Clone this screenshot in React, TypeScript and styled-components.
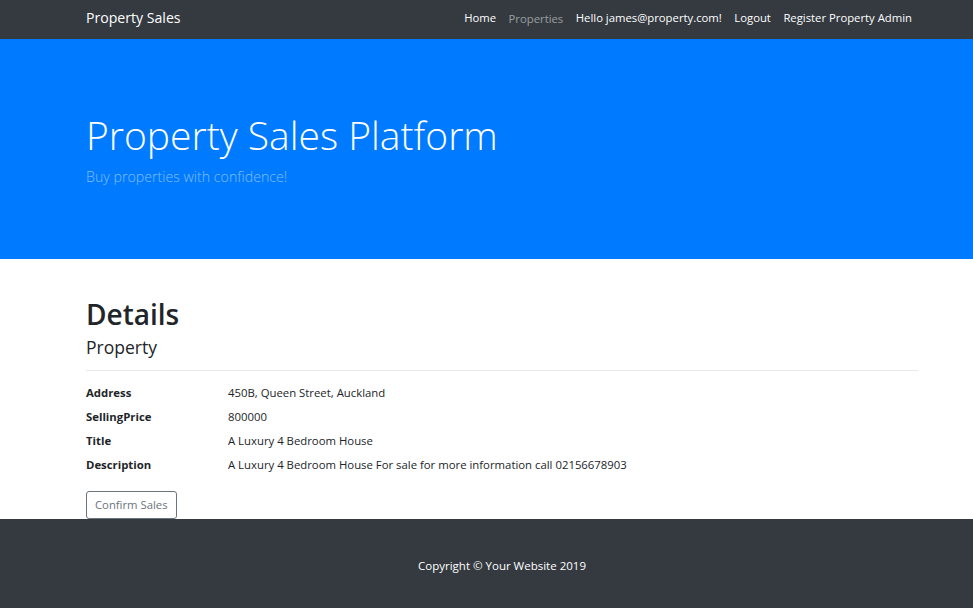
import React from "react";
import styled, { createGlobalStyle } from "styled-components";

const GlobalStyle = createGlobalStyle`
  html, body {
    margin: 0;
    padding: 0;
    background: #fff;
  }
  body {
    font-family: "Open Sans", "Liberation Sans", sans-serif;
    color: #212529;
  }
  * {
    box-sizing: border-box;
  }
`;

const Page = styled.div`
  display: flex;
  flex-direction: column;
  min-height: 608px;
`;

const Container = styled.div`
  padding: 0 55px 0 86px;
`;

const Navbar = styled.nav`
  height: 39px;
  background: #343a40;
`;

const NavInner = styled(Container)`
  display: flex;
  align-items: center;
  height: 100%;
  padding-right: 61px;
  padding-bottom: 5px;
`;

const Brand = styled.a`
  color: #fff;
  font-size: 14.1px;
  text-decoration: none;
  margin-right: auto;
`;

const NavList = styled.ul`
  display: flex;
  align-items: center;
  gap: 12.5px;
  list-style: none;
  margin: 0;
  padding: 0;
`;

const NavLink = styled.a<{ $low?: boolean }>`
  color: ${(p) => (p.$low ? "rgba(255,255,255,0.5)" : "#fff")};
  font-size: 11.3px;
  text-decoration: none;
  display: block;
  padding-top: ${(p) => (p.$low ? "2px" : "0")};
`;

const Jumbotron = styled.header`
  height: 220px;
  background: #007bff;
  color: #fff;
`;

const JumboInner = styled(Container)`
  padding-top: 73px;
`;

const Display = styled.h1`
  margin: 0;
  font-size: 39px;
  font-weight: 300;
  line-height: 1.2;
`;

const Lead = styled.p`
  margin: 8px 0 0;
  font-size: 14.2px;
  font-weight: 300;
  color: #80bdff;
`;

const Main = styled(Container)`
  height: 260px;
  flex: none;
  padding-top: 39px;
`;

const Title = styled.h1`
  margin: 0;
  font-size: 28px;
  font-weight: 600;
  line-height: 1.2;
`;

const Subtitle = styled.h4`
  margin: 5px 0 0;
  font-size: 17.5px;
  font-weight: 500;
  line-height: 1.2;
`;

const Rule = styled.hr`
  margin: 12px 0 10px;
  border: 0;
  border-top: 1px solid #e8e8e8;
`;

const DetailList = styled.dl`
  display: grid;
  grid-template-columns: 142px 1fr;
  margin: 0;
  font-size: 11.35px;
`;

const Term = styled.dt`
  font-weight: 700;
  line-height: 24px;
`;

const Value = styled.dd`
  margin: 0;
  line-height: 24px;
`;

const Button = styled.button`
  display: block;
  margin-top: 14px;
  height: 28px;
  padding: 0 8px;
  background: #fff;
  border: 1px solid #6c757d;
  border-radius: 3px;
  color: #6c757d;
  font-family: inherit;
  font-size: 11.3px;
`;

const Footer = styled.footer`
  flex: 1;
  display: flex;
  background: #343a40;
`;

const FooterInner = styled(Container)`
  flex: 1;
  display: flex;
  align-items: center;
  justify-content: center;
  padding-top: 4px;
  color: #fff;
  font-size: 11.5px;
`;

const details = [
  ["Address", "450B, Queen Street, Auckland"],
  ["SellingPrice", "800000"],
  ["Title", "A Luxury 4 Bedroom House"],
  ["Description", "A Luxury 4 Bedroom House For sale for more information call 02156678903"],
];

export default function App() {
  return (
    <Page>
      <GlobalStyle />
      <Navbar>
        <NavInner>
          <Brand href="#">Property Sales</Brand>
          <NavList>
            <li><NavLink href="#">Home</NavLink></li>
            <li><NavLink href="#" $low>Properties</NavLink></li>
            <li><NavLink href="#">Hello james@property.com!</NavLink></li>
            <li><NavLink href="#">Logout</NavLink></li>
            <li><NavLink href="#">Register Property Admin</NavLink></li>
          </NavList>
        </NavInner>
      </Navbar>
      <Jumbotron>
        <JumboInner>
          <Display>Property Sales Platform</Display>
          <Lead>Buy properties with confidence!</Lead>
        </JumboInner>
      </Jumbotron>
      <Main>
        <Title>Details</Title>
        <Subtitle>Property</Subtitle>
        <Rule />
        <DetailList>
          {details.map(([k, v]) => (
            <React.Fragment key={k}>
              <Term>{k}</Term>
              <Value>{v}</Value>
            </React.Fragment>
          ))}
        </DetailList>
        <Button type="button">Confirm Sales</Button>
      </Main>
      <Footer>
        <FooterInner>Copyright © Your Website 2019</FooterInner>
      </Footer>
    </Page>
  );
}
